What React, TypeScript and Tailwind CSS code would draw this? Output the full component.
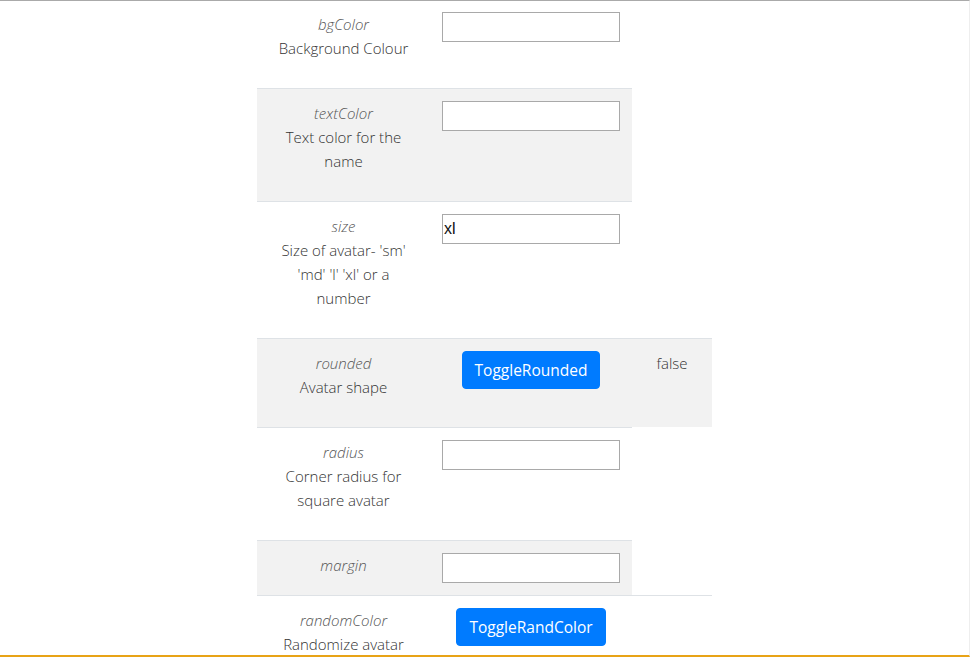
import { useState } from "react";

type Prop = {
  name: string;
  desc?: string;
  kind: "input" | "button";
  value?: string;
  label?: string;
  extra?: string;
  gray?: boolean;
};

const props: Prop[] = [
  { name: "bgColor", desc: "Background Colour", kind: "input" },
  { name: "textColor", desc: "Text color for the name", kind: "input", gray: true },
  { name: "size", desc: "Size of avatar- 'sm' 'md' 'l' 'xl' or a number", kind: "input", value: "xl" },
  { name: "rounded", desc: "Avatar shape", kind: "button", label: "ToggleRounded", extra: "false", gray: true },
  { name: "radius", desc: "Corner radius for square avatar", kind: "input" },
  { name: "margin", kind: "input", gray: true },
  { name: "randomColor", desc: "Randomize avatar color", kind: "button", label: "ToggleRandColor", extra: "" },
];

function Row({ p, first }: { p: Prop; first: boolean }) {
  const [val, setVal] = useState(p.value ?? "");
  return (
    <div
      className={
        "flex " +
        (first ? "" : "border-t border-[#dee2e6] ") +
        (p.gray ? "bg-[#f2f2f2]" : "bg-white")
      }
    >
      {/* name + description */}
      <div className={"w-[173px] px-3 pb-3 text-center " + (first ? "pt-[11px]" : "pt-3")}>
        <em className="block text-[#555] italic">{p.name}</em>
        {p.desc && <p className="mb-4">{p.desc}</p>}
      </div>

      {/* control */}
      <div className={"w-[202px] px-3 pb-3 " + (first ? "pt-[11px]" : "pt-3")}>
        {p.kind === "input" ? (
          <input
            type="text"
            value={val}
            onChange={(e) => setVal(e.target.value)}
            className="block h-[30px] w-[178px] border border-[#a9a9a9] bg-white px-[1px] font-['Liberation_Sans',sans-serif] text-[16px] font-normal text-[#111] outline-none"
          />
        ) : (
          <div className="flex justify-center">
            <button
              type="button"
              className="rounded border border-[#007bff] bg-[#007bff] px-3 py-1.5 text-[15.5px] font-normal leading-6 text-white"
            >
              {p.label}
            </button>
          </div>
        )}
      </div>

      {p.extra !== undefined && (
        <div className="w-[80px] p-3 text-center">{p.extra}</div>
      )}
    </div>
  );
}

export default function App() {
  return (
    <div className="h-[657px] w-[970px] overflow-hidden border-t border-r border-b-2 border-t-[#aaaaaa] border-r-[#eeeeee] border-b-[#e8a317] bg-white font-['Open_Sans',sans-serif] text-[15px] font-light leading-6 text-[#333]">
      <div className="ml-[257px] flex flex-col items-start">
        {props.map((p, i) => (
          <Row key={p.name} p={p} first={i === 0} />
        ))}
      </div>
    </div>
  );
}
